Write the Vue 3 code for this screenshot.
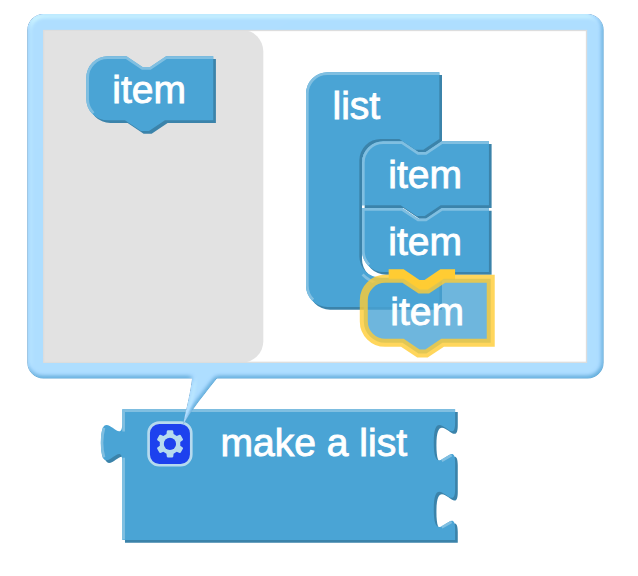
<script setup>
const itemPath =
  'M0,8 A8,8 0 0 1 8,0 H15 l6,4 3,0 6,-4 H47.6 V24 H29.5 l-6,4 -3,0 -6,-4 H8 A8,8 0 0 1 0,16 Z'
const itemLight =
  'M2.7,21.3 A7.5,7.5 0 0 1 0.5,16 V8 A7.5,7.5 0 0 1 8,0.5 H15 l6,4 3,0 6,-4 H47.6'
// stacked items lose the rounded corner on the side where they touch
const upperPath =
  'M0,8 A8,8 0 0 1 8,0 H15 l6,4 3,0 6,-4 H47.6 V24 H29.5 l-6,4 -3,0 -6,-4 H0 Z'
const upperLight = 'M0.5,24 V8 A7.5,7.5 0 0 1 8,0.5 H15 l6,4 3,0 6,-4 H47.6'
const lowerPath =
  'M0,0 H15 l6,4 3,0 6,-4 H47.6 V24 H29.5 l-6,4 -3,0 -6,-4 H8 A8,8 0 0 1 0,16 Z'
const lowerLight = 'M2.7,21.3 A7.5,7.5 0 0 1 0.5,16 V0.5 H15 l6,4 3,0 6,-4 H47.6'
const listPath =
  'M0,8 A8,8 0 0 1 8,0 H50 V25 l-6,4 -3,0 -6,-4 H28 A8,8 0 0 0 20,33 V69 A8,8 0 0 0 28,77 H50 V88 H8 A8,8 0 0 1 0,80 Z'
const listLight =
  'M2.7,85.3 A7.5,7.5 0 0 1 0.5,80 V8 A7.5,7.5 0 0 1 8,0.5 H50 M21.2,75.8 Q23.6,78.2 26.5,79'
const makePath =
  'M0,0 H124.8 V5 c0,10 -8,-8 -8,7.5 s8,-2.5 8,7.5 V30 c0,10 -8,-8 -8,7.5 s8,-2.5 8,7.5 V49 H0 V20 c0,-10 -8,8 -8,-7.5 s8,2.5 8,-7.5 Z'
const makeLight =
  'M0.5,48.8 V18.2 m-7.36,-0.2 q-1.52,-5.5 0,-11 m7.36,1.3 V0.5 H124.8 M119.8,19.3 l3.68,-2.1 M119.8,44.3 l3.68,-2.1'
const gearPath =
  'm4.203,7.296 0,1.368 -0.92,0.677 -0.11,0.41 0.9,1.559 0.41,0.11 1.043,-0.457 1.187,0.683 0.127,1.134 0.3,0.3 1.8,0 0.3,-0.299 0.127,-1.138 1.185,-0.682 1.046,0.458 0.409,-0.11 0.9,-1.559 -0.11,-0.41 -0.92,-0.677 0,-1.366 0.92,-0.677 0.11,-0.41 -0.9,-1.559 -0.409,-0.109 -1.046,0.458 -1.185,-0.682 -0.127,-1.138 -0.3,-0.299 -1.8,0 -0.3,0.3 -0.126,1.135 -1.187,0.682 -1.043,-0.457 -0.41,0.11 -0.899,1.559 0.108,0.409z'

const at = (x, y) => `translate(${x} ${y}) scale(2.6667)`

const blocks = [
  { id: 'flyout-item', x: 86.3, y: 56.3, path: itemPath, light: itemLight, label: 'item', tx: 112.3, ty: 103 },
  { id: 'list', x: 306, y: 72.3, path: listPath, light: listLight, label: 'list', tx: 332.5, ty: 119.2 },
  { id: 'item-1', x: 362, y: 141.3, path: upperPath, light: upperLight, label: 'item', tx: 388.3, ty: 188 },
  { id: 'item-2', x: 362, y: 208, path: lowerPath, light: lowerLight, label: 'item', tx: 388.3, ty: 255 },
]
</script>

<template>
  <svg class="workspace" width="638" height="576" viewBox="0 0 638 576">
    <defs>
      <filter id="emboss" filterUnits="userSpaceOnUse" x="0" y="0" width="240" height="216">
        <feGaussianBlur in="SourceAlpha" stdDeviation="1" result="blur" />
        <feSpecularLighting in="blur" surfaceScale="0.42" specularConstant="0.5" specularExponent="10" lighting-color="white" result="spec">
          <fePointLight x="-5000" y="-10000" z="20000" />
        </feSpecularLighting>
        <feComposite in="spec" in2="SourceAlpha" operator="in" result="spec" />
        <feComposite in="SourceGraphic" in2="spec" operator="arithmetic" k1="0" k2="1" k3="1" k4="0" />
      </filter>
    </defs>

    <!-- parent block -->
    <g :transform="at(122.3, 409.3)">
      <path class="dark" transform="translate(1 1)" :d="makePath" />
      <path class="fill" :d="makePath" />
      <path class="light" :d="makeLight" />
    </g>
    <text class="label" x="220.6" y="456">make a list</text>
    <g class="icon" :transform="at(148.6, 422.6)">
      <rect class="icon-box" width="16" height="16" rx="4" />
      <path class="icon-gear" :d="gearPath" />
      <circle class="icon-hole" cx="8" cy="8" r="2.3" />
    </g>

    <!-- mutator bubble -->
    <g transform="scale(2.6667)" filter="url(#emboss)">
      <rect class="fill" x="10.25" y="5.25" width="216.1" height="136.7" rx="6" />
      <path class="fill" d="M72.2,140 C71.7,147 69.8,153 68.6,159.6 C71.5,154 77,147.5 82.8,140 Z" />
    </g>
    <rect class="surface" x="43.8" y="30.5" width="542.7" height="331.8" />
    <path class="flyout" d="M43.5,30 H242 a21.3,21.3 0 0 1 21.3,21.3 V341.3 a21.3,21.3 0 0 1 -21.3,21.3 H43.5 Z" />

    <g v-for="b in blocks" :key="b.id">
      <g :transform="at(b.x, b.y)">
        <path class="dark" transform="translate(1 1)" :d="b.path" />
        <path class="fill" :d="b.path" />
        <path class="light" :d="b.light" />
      </g>
      <text class="label" :x="b.tx" :y="b.ty">{{ b.label }}</text>
    </g>

    <!-- connection preview and dragged block -->
    <path class="connection" :transform="at(362, 274.7)" d="M10,0 H15 l6,4 3,0 6,-4 H34.9" />
    <path class="dragged" :transform="at(363.8, 278.8)" :d="itemPath" />
    <text class="label" x="390.3" y="325">item</text>
  </svg>
</template>

<style>
body {
  background: #fff;
}
</style>

<style scoped>
.workspace {
  display: block;
}
.fill {
  fill: #4aa4d5;
}
.dark {
  fill: #3b83aa;
}
.light {
  fill: none;
  stroke: #80bfe1;
  stroke-width: 1;
}
.label {
  font-family: "Liberation Sans", Arial, sans-serif;
  font-size: 39px;
  fill: #fff;
  stroke: #fff;
  stroke-width: 0.9;
}
.icon {
  opacity: 0.6;
}
.icon-box {
  fill: #00f;
  stroke: #fff;
  stroke-width: 1;
}
.icon-gear {
  fill: #fff;
}
.icon-hole {
  fill: #00f;
}
.surface {
  fill: #fff;
  stroke: #ddd;
  stroke-width: 1.33;
}
.flyout {
  fill: #ddd;
  fill-opacity: 0.85;
}
.connection {
  fill: none;
  stroke: #fc3;
  stroke-width: 4;
}
.dragged {
  fill: #4aa4d5;
  fill-opacity: 0.8;
  stroke: #fc3;
  stroke-opacity: 0.8;
  stroke-width: 3;
}
</style>
